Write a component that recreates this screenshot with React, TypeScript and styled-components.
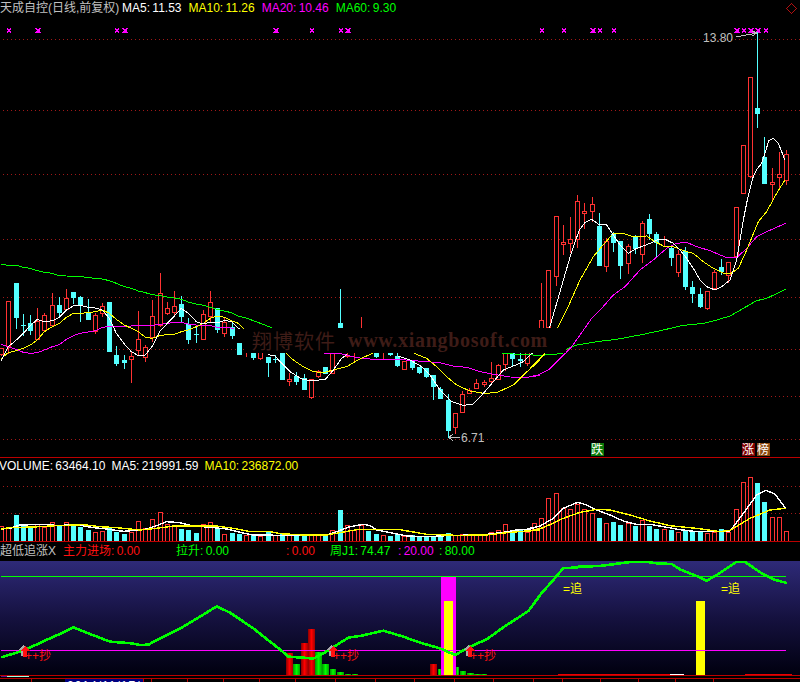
import React from "react";
import styled, { createGlobalStyle } from "styled-components";

type Candle = [number, number, number, number, "r" | "c"];

const RED = "#ff3232";
const CYAN = "#54ffff";
const GREEN = "#00ff00";
const MAGENTA = "#ff00ff";
const YELLOW = "#ffff00";
const GREY = "#c0c0c0";
const BORDER = "#bb0000";

const GlobalStyle = createGlobalStyle`
  html, body {
    margin: 0;
    background: #000;
  }
`;

const Page = styled.div`
  width: 800px;
  height: 682px;
  overflow: hidden;
  display: flex;
  flex-direction: column;
  background: #000;
  font-family: "Liberation Sans", "Noto Sans CJK SC", sans-serif;
  font-size: 12px;
  color: ${GREY};

  svg {
    display: block;
    shape-rendering: crispEdges;
  }
`;

const MainPanel = styled.section`
  position: relative;
  height: 457px;
  border-bottom: 1px solid ${BORDER};
`;

const VolumePanel = styled.section`
  height: 83px;
  border-bottom: 1px solid ${BORDER};
`;

const Legend = styled.header`
  height: 16px;
  display: flex;
  align-items: center;
  gap: 7px;
  line-height: 16px;
  white-space: nowrap;
  word-spacing: -1px;
`;

const VolumeLegend = styled(Legend)`
  gap: 6px;
  margin-left: -1px;
`;

const Title = styled.span`
  width: 115px;
`;

const Reading = styled.span<{ $color: string }>`
  color: ${(p) => p.$color};
`;

const Diamond = styled.svg`
  margin-left: auto;
  margin-right: 3px;
`;

const Watermark = styled.div`
  position: absolute;
  left: 244px;
  top: 328px;
  width: 322px;
  height: 25px;
  display: flex;
  align-items: center;
  gap: 12px;
  padding-left: 8px;
  box-sizing: border-box;
  background: #000;
  color: #3e1c17;
  white-space: nowrap;
`;

const WatermarkName = styled.span`
  font-size: 20px;
  letter-spacing: 1px;
`;

const WatermarkUrl = styled.span`
  font-family: "Liberation Serif", serif;
  font-size: 20px;
  font-weight: 700;
  letter-spacing: 0.7px;
`;

const IndicatorLegend = styled.header`
  height: 19px;
  display: grid;
  grid-template-columns: 63px 113px 110px 44px 68px 41px auto;
  align-items: center;
  line-height: 19px;
  white-space: nowrap;
  word-spacing: -1px;
`;

const IndicatorChart = styled.div`
  height: 114px;
  background: linear-gradient(#2e2a78, #15113f 50%, #00000f);
`;

const Axis = styled.footer`
  position: relative;
  height: 7px;
`;

const DateChip = styled.div`
  position: absolute;
  left: 65px;
  top: 4px;
  width: 78px;
  height: 3px;
  box-sizing: border-box;
  padding-left: 2px;
  overflow: hidden;
  background: #000080;
  color: #fff;
  font-size: 12px;
  line-height: 14px;
  letter-spacing: 1px;
`;

const Grid = styled.line`
  stroke: #a01818;
  stroke-dasharray: 1 3;
`;

const Trace = styled.polyline<{ $color: string; $weight?: number }>`
  fill: none;
  stroke: ${(p) => p.$color};
  stroke-width: ${(p) => p.$weight ?? 1};
`;

const Rule = styled.line<{ $color: string }>`
  stroke: ${(p) => p.$color};
`;

const HollowBody = styled.rect`
  fill: #000;
  stroke: ${RED};
`;

const SolidBody = styled.rect`
  fill: ${CYAN};
`;

const ChartText = styled.text<{ $color: string }>`
  fill: ${(p) => p.$color};
  font-size: 12px;
`;

const Column = styled.rect<{ $color: string }>`
  fill: ${(p) => p.$color};
`;

// reads the picture's coordinates, noted at 3x, back into page pixels
const trace = (ox: number, oy: number, pts: string) =>
  pts
    .split(" ")
    .map((p) => {
      const [x, y] = p.split(",").map(Number);
      return `${ox + x / 3},${oy + y / 3}`;
    })
    .join(" ");

const slotX = (i: number) => Math.floor(1.7 + 7.2 * i);

const early: Candle[] = [
  [355, 372, 355, 378, "r"], [214, 347, 214, 372, "r"], [159, 264, 159, 297, "c"], [286, 289, 252, 318, "c"],
  [279, 303, 255, 315, "c"], [272, 327, 235, 327, "r"], [256, 300, 250, 305, "r"], [226, 285, 190, 288, "r"],
  [225, 249, 202, 260, "c"], [205, 236, 178, 240, "r"], [186, 204, 186, 222, "c"], [202, 226, 198, 275, "c"],
  [247, 270, 208, 270, "c"], [256, 302, 250, 312, "r"], [229, 250, 220, 260, "r"], [216, 366, 216, 366, "c"],
  [375, 402, 348, 408, "c"], [391, 398, 375, 417, "c"], [379, 388, 362, 458, "r"], [328, 359, 244, 375, "r"],
  [352, 380, 345, 396, "r"], [259, 321, 210, 335, "r"], [190, 284, 129, 290, "r"], [235, 250, 217, 256, "r"],
  [229, 247, 183, 255, "r"], [222, 261, 198, 276, "c"], [281, 330, 264, 342, "c"], [313, 316, 290, 339, "c"],
  [253, 326, 240, 326, "r"], [217, 257, 183, 280, "r"], [235, 300, 235, 309, "c"], [277, 308, 265, 320, "r"],
  [292, 318, 276, 327, "c"], [340, 374, 340, 374, "c"], [0, 0, 369, 381, "r"], [340, 384, 340, 390, "c"],
  [340, 384, 340, 389, "r"], [381, 399, 381, 441, "c"], [387, 390, 375, 400, "c"], [340, 450, 340, 450, "c"],
  [448, 452, 430, 468, "r"], [438, 456, 425, 465, "c"], [444, 480, 433, 480, "c"], [448, 500, 448, 507, "r"],
  [424, 437, 420, 443, "r"], [411, 432, 411, 432, "c"], [320, 430, 320, 430, "r"], [280, 297, 178, 297, "c"],
  [376, 378, 340, 384, "r"], [0, 0, 340, 396, "r"], [0, 0, 262, 340, "r"], [0, 0, 0, 0, "c"],
  [340, 382, 340, 385, "c"], [0, 0, 340, 388, "r"], [340, 375, 340, 378, "c"], [378, 408, 340, 410, "c"],
  [392, 416, 392, 416, "r"], [393, 415, 393, 419, "c"], [410, 430, 410, 433, "c"], [415, 442, 415, 445, "c"],
  [435, 471, 435, 510, "c"], [477, 507, 472, 507, "c"], [511, 603, 492, 625, "c"], [549, 590, 549, 612, "r"],
  [492, 545, 484, 545, "r"], [480, 488, 475, 492, "r"], [460, 473, 448, 473, "r"], [457, 461, 450, 470, "r"],
  [445, 453, 396, 460, "r"], [405, 446, 403, 446, "r"], [340, 401, 340, 422, "r"], [340, 387, 340, 410, "c"],
  [387, 394, 340, 412, "c"], [340, 398, 340, 407, "r"], [0, 0, 293, 297, "r"],
];

const middle: Candle[] = [
  [420, 500, 310, 500, "r"], [271, 440, 271, 440, "r"], [109, 287, 109, 317, "r"], [186, 193, 135, 225, "r"],
  [178, 188, 111, 220, "r"], [64, 176, 45, 203, "r"], [94, 98, 70, 148, "r"], [72, 94, 52, 125, "r"],
  [138, 258, 100, 258, "c"], [184, 258, 175, 275, "r"], [163, 188, 155, 215, "c"], [184, 258, 184, 296, "c"],
  [199, 250, 192, 281, "r"], [172, 207, 165, 222, "c"], [130, 223, 124, 248, "r"], [118, 163, 102, 180, "c"],
  [162, 190, 155, 232, "c"], [0, 0, 168, 200, "r"], [205, 233, 197, 258, "c"], [222, 277, 210, 290, "r"],
  [212, 320, 202, 330, "c"], [321, 342, 304, 368, "c"], [342, 381, 325, 384, "c"], [334, 383, 334, 390, "r"],
  [277, 323, 270, 325, "r"], [262, 277, 238, 285, "c"], [247, 285, 247, 310, "r"], [80, 228, 80, 235, "r"],
];

const late: Candle[] = [
  [436, 578, 436, 578, "r"], [232, 527, 232, 535, "r"], [324, 342, 95, 384, "c"], [471, 552, 411, 552, "c"],
  [547, 551, 504, 600, "r"], [522, 530, 455, 570, "r"], [463, 539, 450, 555, "r"],
];

const candles = [
  ...early.map((c, i) => ({ c, i, oy: 230 })),
  ...middle.map((c, i) => ({ c, i: i + 75, oy: 180 })),
  ...late.map((c, i) => ({ c, i: i + 103, oy: 0 })),
];

const volumeTops =
  "r214 r220 c180 c213 c218 r208 r215 r201 c212 r201 c208 c216 c225 r231 r227 c218 c230 c237 r232 r198 r220 r192 r171 r207 r214 c221 c225 c234 r207 r201 c218 r237 c234 c236 r240 c238 r243 c229 " +
  "r241 c238 r240 c243 c241 r238 r238 c243 r225 c165 r210 r225 r210 c228 c237 r240 c243 c238 r243 c241 c243 c245 c245 c245 c234 r241 r238 r241 r240 r241 r232 r226 r207 c225 c225 r231 r205 " +
  "r190 r130 r115 r160 r163 r147 r163 r175 c189 r205 c201 c210 r203 c213 r196 c213 c222 r222 c225 r232 c228 c230 c232 r235 r230 c222 r230 r163 r82 r67 c84 c141 r187 r187 r229";

const ma5 = [
  trace(0, 230, "4,392 25,350 49,330 70,310 91,287 112,268 133,276 157,272 178,262 199,240 220,228 241,226 265,232 286,234 307,240 328,265 349,310 373,342 394,365 415,377 436,375 457,348 481,302 502,280 523,258 544,235 565,250 589,275 610,282 631,276 652,278 673,272 694,274 718,297"),
  trace(270, 230, "-6,372 0,375 15,378 30,395 60,425 95,447 125,453 167,447 190,420 215,385 232,372"),
  trace(270, 230, "385,378 420,390 455,410 480,435 510,480 545,515 580,526 610,522 640,490 670,455 700,420 730,408 760,395 787,369"),
  trace(530, 180, "58,445 80,370 100,300 125,215 148,150 165,128 185,118 205,132 230,135 250,165 270,195 295,220 320,205 340,198 360,190 380,180 405,178 430,190 450,210 470,235 490,265 510,300 530,320 555,330 575,320 600,300 620,240 640,120 654,50 668,-5 679,-30 695,-50 717,-119 730,-125 745,-110 757,-80 765,-59"),
];

const ma10 = [
  trace(0, 230, "4,385 25,368 49,362 70,355 91,345 112,330 133,305 157,290 178,280 199,262 220,250 241,250 265,248 286,245 307,240 328,250 349,268 373,285 394,295 415,305 436,322 457,325 481,316 502,314 523,313 544,305 565,300 589,290 610,280 631,265 652,258 673,262 694,272 715,280 732,296"),
  trace(270, 230, "48,370 70,390 100,410 130,425 160,428 190,420 230,410 260,392 285,380 310,369"),
  trace(270, 230, "432,370 470,385 500,410 530,440 560,465 600,483 640,490 680,488 730,465 760,435 790,408 810,390"),
  trace(530, 180, "0,565 20,545 45,520"),
  trace(530, 180, "82,445 110,390 150,300 190,230 215,200 250,160 280,160 310,170 350,168 375,185 400,198 430,200 460,212 490,220 520,245 550,265 580,280 600,282 625,265 650,210 685,125 710,95 740,40 765,0"),
];

const ma20 = [
  trace(0, 230, "4,343 25,350 49,358 70,367 91,370 112,368 133,360 157,350 178,344 199,328 220,317 241,310 265,306 286,302 307,292 328,289 349,289 373,289 394,288 415,286 457,286 481,283 502,280 523,277 544,277 565,282 589,285 610,285 631,287 652,292 673,293 694,294 703,295"),
  trace(270, 230, "162,370 215,372 260,383 310,388 385,388 430,392 470,395 510,398 550,408 590,412 630,425 670,433 720,441 770,442 810,436"),
  trace(530, 180, "0,590 25,585 55,570 90,535 125,500 150,465 185,415 215,385 250,345 285,320 330,270 370,240 410,205 440,190 470,187 500,200 540,212 590,233 620,233 650,205 680,170 710,155 767,130"),
];

const ma60 = [
  trace(0, 230, "4,103 25,106 49,106 70,112 91,115 112,122 133,127 157,130 178,137 199,138 241,139 265,143 307,147 328,152 349,160 373,170 394,175 415,183 436,188 457,194 481,197 502,201 523,204 544,208 565,216 589,222 610,226 631,232 652,238 673,243 694,248 715,258 739,264 760,272 781,280 822,296"),
  trace(270, 230, "696,370 730,372 810,376 840,374 880,370"),
  trace(530, 180, "108,508 140,495 200,485 260,478 340,463 400,450 460,436 520,430 560,420 600,408 640,385 680,362 710,355 767,328"),
];

const volumeWhite = [
  trace(0, 455, "4,222 30,220 60,210 100,209 150,209 170,212 200,210 240,211 280,218 320,222 370,229 410,226 440,222 470,212 500,200 540,203 575,212 620,216 680,222 720,232 760,240 810,240"),
  trace(270, 455, "0,240 30,242 100,242 170,240 200,230 240,215 280,208 300,212 320,225 370,235 410,243 470,245 530,242 600,240 650,238 700,232 740,225 780,222 810,213"),
  trace(530, 455, "0,220 30,213 70,190 100,160 143,142 170,150 200,165 240,180 280,198 320,208 360,208 400,215 450,224 500,230 560,230 600,228 640,175 680,120 708,106 735,117 767,160"),
];

const volumeYellow = [
  trace(0, 455, "4,222 30,218 100,216 170,212 250,209 300,215 350,218 420,225 470,220 520,213 600,213 650,213 700,220 750,230 810,230"),
  trace(270, 455, "0,230 30,236 100,240 170,240 260,224 390,224 470,238 560,241 650,240 720,232 810,225"),
  trace(530, 455, "0,228 40,218 100,190 150,172 200,163 240,165 300,180 360,198 420,212 500,220 570,230 600,226 660,190 720,165 767,160"),
];

const trend = [
  trace(0, 540, "4,352 60,335 100,318 150,295 195,275 220,262 270,282 330,305 395,310 420,315 445,314 490,290 550,260 600,230 650,199 690,218 760,265 810,305"),
  trace(270, 540, "0,305 30,328 55,350 100,353 130,356 160,340 200,315 235,293 275,287 340,272 400,290 450,308 510,325 555,345 600,320 650,298 700,262 775,213 810,166"),
  trace(530, 540, "0,207 30,165 70,120 100,84 140,83 145,80 210,78 270,70 300,66 355,66 380,70 425,72 450,88 500,108 530,122 560,105 620,65 645,66 700,103 730,118 770,129"),
];

const crosses: [number, boolean][] = [
  [9, false], [38, true], [117, false], [125, true], [276, true], [312, false], [341, false], [348, true],
  [542, false], [564, false], [593, true], [600, false], [614, false], [737, true], [744, false], [751, true],
  [758, true], [766, false],
];

// x, width, top, and whether the column is a red or a green one
const pillars: [number, number, number, "red" | "green"][] = [
  [286, 7, 653, "red"], [293, 7, 664, "green"], [301, 7, 643, "red"], [308, 7, 629, "red"], [315, 7, 652, "green"],
  [322, 7, 664, "green"], [330, 6, 669, "green"], [337, 7, 672, "green"], [345, 6, 674, "green"], [352, 6, 674, "green"],
  [430, 7, 664, "red"], [438, 3, 669, "green"], [456, 3, 667, "green"], [460, 6, 671, "green"], [467, 7, 673, "green"],
  [474, 7, 674, "green"], [481, 6, 674, "green"],
];

const ticks = [31, 65, 143, 151, 187, 223, 259, 295, 335, 375, 414, 454, 493, 533, 562, 600, 638, 675, 713];

const CrossMark = ({ x, big }: { x: number; big: boolean }) => {
  const r = big ? 2.5 : 2;
  const d = `M${x - r} ${30.5 - r}L${x + r} ${30.5 + r}M${x + r} ${30.5 - r}L${x - r} ${30.5 + r}`;
  return (
    <g>
      <path d={d} fill="none" stroke={MAGENTA} strokeWidth={big ? 1.4 : 1} />
      {big && <rect x={x - 1} y={29.5} width={3} height={3} fill={MAGENTA} />}
    </g>
  );
};

const BuyMark = ({ x }: { x: number }) => {
  const arrow = (cx: number, fill: string, top: number) => (
    <path d={`M${cx} ${top}l5 5h-3v6h-4v-6h-3z`} fill={fill} />
  );
  return (
    <g>
      {arrow(x - 1, "#aaa", 645)}
      {arrow(x + 1, "#ff1010", 646)}
      <ChartText $color="#ff1010" x={x + 1} y={660}>
        ++抄
      </ChartText>
    </g>
  );
};

const ChaseMark = ({ x }: { x: number }) => (
  <ChartText $color={YELLOW} x={x} y={593}>
    =追
  </ChartText>
);

const App = () => (
  <Page>
    <GlobalStyle />
    <MainPanel>
      <Legend>
        <Title>天成自控(日线,前复权)</Title>
        <Reading $color="#fff">MA5: 11.53</Reading>
        <Reading $color={YELLOW}>MA10: 11.26</Reading>
        <Reading $color={MAGENTA}>MA20: 10.46</Reading>
        <Reading $color={GREEN}>MA60: 9.30</Reading>
        <Diamond width="11" height="11" viewBox="0 0 11 11">
          <path d="M5.5 0.5L10.5 5.5L5.5 10.5L0.5 5.5Z" fill="none" stroke="#b01010" />
        </Diamond>
      </Legend>
      <svg width="800" height="441" viewBox="0 16 800 441">
        {[39.5, 110.5, 174.5, 239.5, 297.5, 349.5, 396.5, 439.5].map((y) => (
          <Grid key={y} x1="3" x2="800" y1={y} y2={y} />
        ))}
        {crosses.map(([x, big]) => (
          <CrossMark key={x} x={x} big={big} />
        ))}
        {candles.map(({ c, i, oy }) => {
          const [top, bottom, high, low, kind] = c;
          const x = slotX(i);
          const y1 = Math.round(oy + top / 3);
          const y2 = Math.round(oy + bottom / 3);
          const wick = high !== low && (
            <Rule
              $color={kind === "r" ? RED : CYAN}
              x1={x + 0.5}
              x2={x + 0.5}
              y1={Math.round(oy + high / 3)}
              y2={Math.round(oy + low / 3)}
            />
          );
          return (
            <g key={i}>
              {wick}
              {top !== bottom &&
                (kind === "r" ? (
                  <HollowBody x={x - 1.5} y={y1 + 0.5} width={4} height={Math.max(y2 - y1, 1)} />
                ) : (
                  <SolidBody x={x - 2} y={y1} width={5} height={Math.max(y2 - y1, 1)} />
                ))}
            </g>
          );
        })}
        {ma60.map((p) => (
          <Trace key={p} points={p} $color={GREEN} />
        ))}
        {ma20.map((p) => (
          <Trace key={p} points={p} $color={MAGENTA} />
        ))}
        {ma10.map((p) => (
          <Trace key={p} points={p} $color={YELLOW} />
        ))}
        {ma5.map((p) => (
          <Trace key={p} points={p} $color="#fff" />
        ))}
        <ChartText $color={GREY} x="703" y="42">
          13.80
        </ChartText>
        <path d="M736 37L757 33M757 33L752 31M757 33L752 36" fill="none" stroke={GREY} />
        <ChartText $color={GREY} x="461" y="442">
          6.71
        </ChartText>
        <path d="M460 437.5H449M449 437.5L453 434M449 437.5L453 441" fill="none" stroke={GREY} />
        <rect x="591" y="443" width="13" height="13" fill="#0a7a0a" />
        <ChartText $color="#fff" x="591" y="454">
          跌
        </ChartText>
        <rect x="742" y="443" width="13" height="13" fill="#800000" />
        <ChartText $color="#fff" x="742" y="454">
          涨
        </ChartText>
        <rect x="757" y="443" width="13" height="13" fill="#8b4a10" />
        <ChartText $color="#fff" x="757" y="454">
          榜
        </ChartText>
      </svg>
      <Watermark>
        <WatermarkName>翔博软件</WatermarkName>
        <WatermarkUrl>www.xiangbosoft.com</WatermarkUrl>
      </Watermark>
    </MainPanel>

    <VolumePanel>
      <VolumeLegend>
        <Reading $color="#fff">VOLUME: 63464.10</Reading>
        <Reading $color="#fff">MA5: 219991.59</Reading>
        <Reading $color={YELLOW}>MA10: 236872.00</Reading>
      </VolumeLegend>
      <svg width="800" height="67" viewBox="0 474 800 67">
        {[486.5, 513.5].map((y) => (
          <Grid key={y} x1="3" x2="800" y1={y} y2={y} />
        ))}
        {volumeTops.split(" ").map((t, i) => {
          const x = slotX(i);
          const y = Math.round(455 + Number(t.slice(1)) / 3);
          return t[0] === "r" ? (
            <HollowBody key={i} x={x - 1.5} y={y + 0.5} width={4} height={541 - y} />
          ) : (
            <SolidBody key={i} x={x - 2} y={y} width={5} height={541 - y} />
          );
        })}
        {volumeWhite.map((p) => (
          <Trace key={p} points={p} $color="#fff" $weight={1.4} />
        ))}
        {volumeYellow.map((p) => (
          <Trace key={p} points={p} $color={YELLOW} $weight={1.4} />
        ))}
      </svg>
    </VolumePanel>

    <IndicatorLegend>
      <Reading $color={GREY}>超低追涨X</Reading>
      <Reading $color="#ff1010">主力进场: 0.00</Reading>
      <Reading $color={GREEN}>拉升: 0.00</Reading>
      <Reading $color="#ff1010">: 0.00</Reading>
      <Reading $color={GREEN}>周J1: 74.47</Reading>
      <Reading $color={MAGENTA}>: 20.00</Reading>
      <Reading $color={GREEN}>: 80.00</Reading>
    </IndicatorLegend>
    <IndicatorChart>
      <svg width="800" height="114" viewBox="0 561 800 114">
        <defs>
          <linearGradient id="redPillar">
            <stop offset="0" stopColor="#8c0000" />
            <stop offset="0.5" stopColor="#ff0000" />
            <stop offset="1" stopColor="#a00000" />
          </linearGradient>
          <linearGradient id="greenPillar">
            <stop offset="0" stopColor="#009000" />
            <stop offset="0.5" stopColor="#00ff00" />
            <stop offset="1" stopColor="#00a000" />
          </linearGradient>
        </defs>
        <Column $color={MAGENTA} x="441" y="577" width="15" height="98" />
        <Column $color={YELLOW} x="444" y="601" width="9" height="74" />
        <Column $color={YELLOW} x="696" y="601" width="9" height="74" />
        {pillars.map(([x, w, top, tone]) => (
          <Column key={x} $color={`url(#${tone}Pillar)`} x={x} y={top} width={w} height={675 - top} />
        ))}
        <Rule $color={GREEN} x1="1" x2="786" y1="576.5" y2="576.5" />
        <Rule $color={MAGENTA} x1="1" x2="786" y1="650.5" y2="650.5" />
        {trend.map((p) => (
          <Trace key={p} points={p} $color={GREEN} $weight={2.6} />
        ))}
        <BuyMark x={24} />
        <BuyMark x={332} />
        <BuyMark x={469} />
        <ChaseMark x={563} />
        <ChaseMark x={721} />
        <Column $color="#e80000" x="558" y="674" width="112" height="1" />
        <Column $color="#fff" x="670" y="674" width="14" height="1" />
        <Column $color="#e80000" x="745" y="674" width="47" height="1" />
      </svg>
    </IndicatorChart>
    <Axis>
      <svg width="800" height="7" viewBox="0 675 800 7">
        <Rule $color={BORDER} x1="0" x2="800" y1="675.5" y2="675.5" />
        <Rule $color={BORDER} x1="0" x2="800" y1="678.5" y2="678.5" />
        <Rule $color="#60108c" x1="1" x2="7" y1="676.5" y2="676.5" />
        <Rule $color="#a0ffe0" x1="7" x2="29" y1="676.5" y2="676.5" />
        {ticks.map((x) => (
          <Rule key={x} $color={BORDER} x1={x + 0.5} x2={x + 0.5} y1="679" y2="682" />
        ))}
      </svg>
      <DateChip>2014/11/17/一</DateChip>
    </Axis>
  </Page>
);

export default App;
